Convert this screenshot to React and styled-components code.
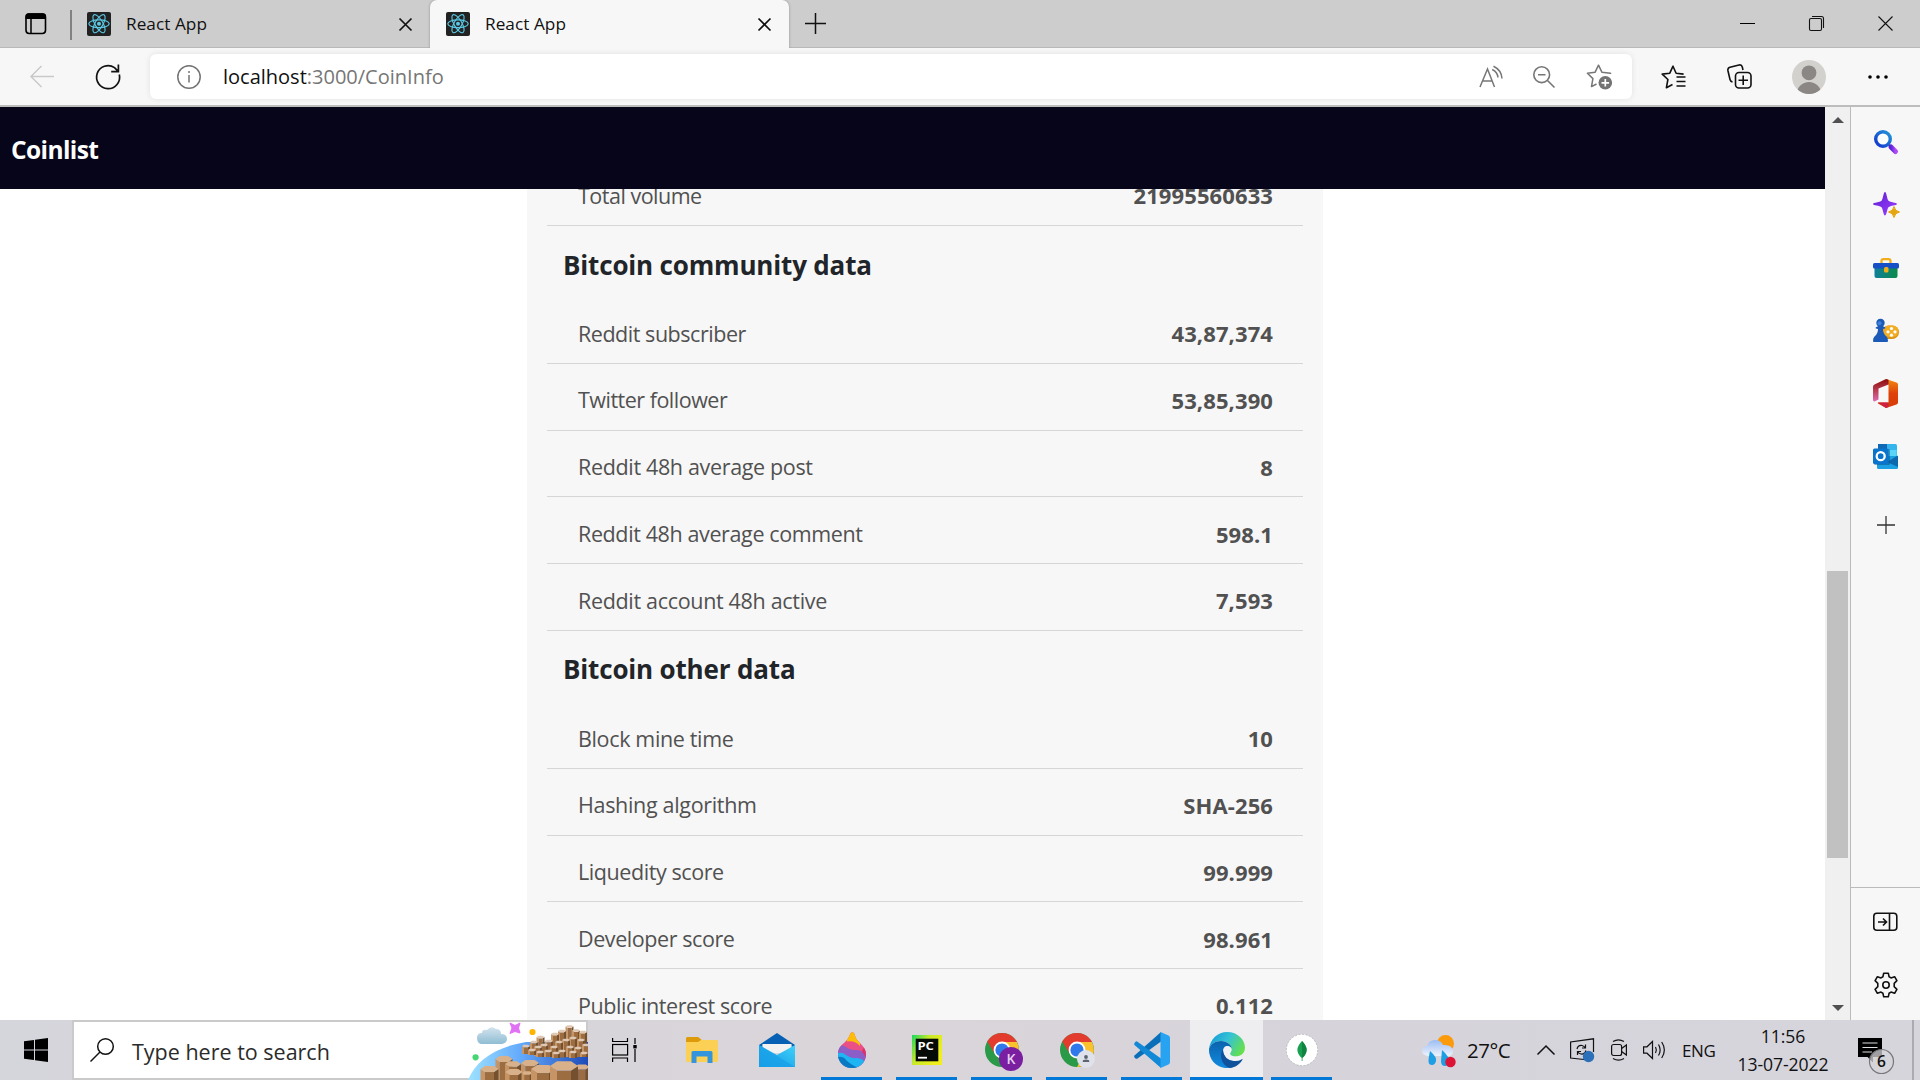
import React from "react";
import styled, { createGlobalStyle } from "styled-components";

const GlobalStyle = createGlobalStyle`
  * { box-sizing: border-box; }
  body { margin: 0; overflow: hidden; font-family: "Segoe UI", "Open Sans", "Noto Sans", sans-serif; }
  svg { display: block; flex: none; overflow: visible; }
`;

const Screen = styled.div`
  width: 1920px;
  height: 1080px;
  display: flex;
  flex-direction: column;
  background: #fff;
  overflow: hidden;
`;

/* ---------- tab strip ---------- */

const TabStrip = styled.div`
  height: 48px;
  flex: none;
  display: flex;
  background: #cdcdcd;
  box-shadow: inset 0 -1px 0 #b9b9b9;
`;

const TabActions = styled.div`
  width: 72px;
  display: flex;
  align-items: center;
  justify-content: space-between;
  padding-left: 25px;
`;

const TabDivider = styled.div`
  width: 2px;
  height: 30px;
  margin-top: 2px;
  background: #818181;
`;

const Tab = styled.div`
  width: ${(p) => p.$width}px;
  display: flex;
  align-items: center;
  padding: 0 18px 0 ${(p) => p.$left}px;
  background: ${(p) => (p.$active ? "#f7f7f7" : "transparent")};
  border-radius: 7px 7px 0 0;
  box-shadow: ${(p) => (p.$active ? "0 0 3px rgba(0,0,0,.28)" : "none")};
  clip-path: inset(0 -4px 0 -4px);
`;

const TabTitle = styled.span`
  flex: 1;
  margin-left: ${(p) => p.$gap}px;
  font-size: 17.2px;
  line-height: 24px;
  letter-spacing: 0.05px;
  color: #111;
`;

const NewTab = styled.div`
  width: 52px;
  display: flex;
  align-items: center;
  justify-content: center;
  padding-bottom: 2px;
`;

const WindowButtons = styled.div`
  margin-left: auto;
  display: flex;
`;

const WindowButton = styled.div`
  width: 69px;
  display: flex;
  align-items: center;
  justify-content: center;
  padding-bottom: 1px;
`;

/* ---------- address bar ---------- */

const Toolbar = styled.div`
  height: 59px;
  flex: none;
  display: flex;
  align-items: center;
  background: #f7f7f7;
  border-bottom: 2px solid #bdbdbd;
`;

const ToolButton = styled.div`
  width: ${(p) => p.$width}px;
  display: flex;
  align-items: center;
  justify-content: center;
`;

const AddressBar = styled.div`
  width: 1482px;
  height: 45px;
  display: flex;
  align-items: center;
  margin-left: 18px;
  padding-left: 27px;
  background: #fff;
  border-radius: 6px;
  box-shadow: 0 0 6px rgba(0, 0, 0, 0.09);
`;

const Url = styled.div`
  flex: 1;
  margin-left: 22px;
  font-size: 20px;
  line-height: 28px;
  letter-spacing: 0;
  color: #767676;
`;

const Host = styled.span`
  color: #111;
`;

/* ---------- page ---------- */

const Body = styled.div`
  height: 913px;
  flex: none;
  display: flex;
`;

const Page = styled.div`
  width: 1825px;
  display: flex;
  flex-direction: column;
  overflow: hidden;
`;

const NavBar = styled.header`
  height: 82px;
  flex: none;
  display: flex;
  align-items: center;
  padding: 2px 0 0 11px;
  background: #06051a;
  color: #fff;
  font-size: 24.5px;
  font-weight: 700;
  letter-spacing: -0.6px;
`;

const Content = styled.main`
  flex: 1;
  min-height: 0;
  overflow: hidden;
  display: flex;
  justify-content: center;
  align-items: flex-start;
`;

const Card = styled.section`
  width: 796px;
  flex: none;
  margin: -29.8px 0 0 25px;
  padding: 0 20px 40px;
  background: #f7f7f7;
`;

const SectionTitle = styled.h2`
  height: 71px;
  margin: 0;
  padding: 6px 0 0 16px;
  display: flex;
  align-items: center;
  font-size: 26px;
  font-weight: 700;
  letter-spacing: -0.17px;
  color: #212529;
`;

const Row = styled.div`
  height: 66.8px;
  display: flex;
  align-items: center;
  justify-content: space-between;
  padding: 6.5px 30px 0 31px;
  border-bottom: 1px solid #d6d6d6;
  font-size: 21.5px;
  color: #515151;
`;

const Label = styled.span`
  letter-spacing: ${(p) => p.$tracking}px;
`;

const Value = styled.span`
  font-size: 22px;
  font-weight: 700;
  letter-spacing: 0.1px;
`;

const Scrollbar = styled.div`
  width: 25px;
  display: flex;
  flex-direction: column;
  align-items: center;
  justify-content: space-between;
  background: #f0f0f0;
  padding: 10px 0 9px;
`;

const Thumb = styled.div`
  width: 21px;
  height: 287px;
  margin-top: 301px;
  background: #c1c1c1;
`;

const Sidebar = styled.aside`
  width: 70px;
  display: flex;
  flex-direction: column;
  border-left: 1px solid #bbb;
  background: #f7f7f7;
`;

const SideTop = styled.div`
  flex: 1;
  padding-top: 3px;
`;

const SideBottom = styled.div`
  height: 133px;
  padding-top: 2px;
  border-top: 1px solid #bbb;
`;

const SideItem = styled.div`
  height: ${(p) => p.$height || 63}px;
  display: flex;
  align-items: center;
  justify-content: center;
`;

/* ---------- taskbar ---------- */

const Taskbar = styled.footer`
  height: 60px;
  flex: none;
  display: flex;
  background: linear-gradient(90deg, #d5d5dc 0, #d8d5da 600px, #dad5d9 900px, #d6d3db 1350px, #d6d5dc 100%);
`;

const StartButton = styled.div`
  width: 72px;
  display: flex;
  align-items: center;
  justify-content: center;
`;

const SearchBox = styled.div`
  width: 516px;
  display: flex;
  align-items: center;
  border: 2px solid #cacaca;
  background: #fff;
  padding-left: 16px;
`;

const SearchText = styled.span`
  flex: 1;
  margin: 3px 0 0 18px;
  font-size: 21.5px;
  letter-spacing: 0;
  color: #2b2b2b;
`;

const ArtFrame = styled.div`
  width: 120px;
  height: 60px;
  margin: -2px -2px -2px 0;
  overflow: hidden;
`;

const Apps = styled.div`
  display: flex;
  gap: 2px;
`;

const AppButton = styled.div`
  width: 73px;
  display: flex;
  flex-direction: column;
  align-items: center;
  background: ${(p) => (p.$active ? "#eeeef0" : "transparent")};

  &:first-child {
    margin-right: 2px;
  }
`;

const AppIcon = styled.div`
  height: 57px;
  display: flex;
  align-items: center;
  padding-top: 3px;
`;

const Underline = styled.div`
  width: ${(p) => (p.$active ? 73 : 61)}px;
  height: 3px;
  background: #0078d7;
`;

const Tray = styled.div`
  margin-left: auto;
  width: 498px;
  display: flex;
  align-items: center;
  color: #111;
`;

const TrayText = styled.span`
  width: ${(p) => p.$width}px;
  font-size: ${(p) => p.$size}px;
  letter-spacing: ${(p) => p.$tracking || 0}px;
  white-space: nowrap;
`;

const TrayIcon = styled.div`
  width: ${(p) => p.$width}px;
`;

const Clock = styled.div`
  width: 120px;
  display: flex;
  flex-direction: column;
  align-items: center;
  font-size: 17.6px;
  line-height: 28px;
  letter-spacing: -0.1px;
`;

const Notifications = styled.div`
  width: 58px;
  padding: 14px 0 0 15px;
`;

const ShowDesktop = styled.div`
  width: 8px;
  height: 60px;
  border-left: 2px solid #acaab0;
`;

/* ---------- drawings ---------- */

const ReactFavicon = () => (
  <svg width="24" height="24" viewBox="0 0 24 24">
    <rect width="24" height="24" rx="2" fill="#222" />
    <g fill="none" stroke="#5cc9e6" strokeWidth="1.15">
      {[0, 60, 120].map((a) => (
        <ellipse key={a} cx="12" cy="11.7" rx="10.2" ry="3.9" transform={`rotate(${a} 12 11.7)`} />
      ))}
    </g>
    <circle cx="12" cy="11.7" r="2" fill="#5cc9e6" />
  </svg>
);

const Close = ({ size = 13, weight = 1.7 }) => (
  <svg width={size} height={size} viewBox={`0 0 ${size} ${size}`} stroke="#111" strokeWidth={weight}>
    <path d={`M.5 .5 L${size - 0.5} ${size - 0.5} M${size - 0.5} .5 L.5 ${size - 0.5}`} />
  </svg>
);

const Plus = ({ size = 21, color = "#111" }) => (
  <svg width={size} height={size} viewBox="0 0 21 21" stroke={color} strokeWidth="1.5">
    <path d="M10.5 0V21M0 10.5H21" />
  </svg>
);

const TabMenuIcon = () => (
  <svg width="22" height="22" viewBox="0 0 22 22">
    <rect x="1" y="1" width="19.5" height="19.5" rx="3.2" fill="none" stroke="#000" strokeWidth="1.6" />
    <path d="M.5 6V3.5Q.5 .3 3.7 .3H17.8Q21 .3 21 3.5V6Z" />
    <path d="M6 6V20.5" stroke="#000" strokeWidth="1.5" />
  </svg>
);

const Gear = () => (
  <svg width="26" height="26" viewBox="0 0 26 26" fill="none" stroke="#111" strokeWidth="1.6" strokeLinejoin="round">
    <path d="M10.700 1.200h4.600l.8 3.600 1.900 1.100 3.600-1.200 2.300 4-2.700 2.600v3.400l2.700 2.600-2.300 4-3.600-1.200-1.900 1.100-.8 3.600h-4.600l-.8-3.600L8 20.100l-3.600 1.200-2.300-4 2.700-2.600v-3.400L2.100 8.700l2.300-4L8 5.900l1.900-1.100z" />
    <circle cx="13" cy="13" r="3.200" />
  </svg>
);

const SideSearch = () => (
  <svg width="24" height="24" viewBox="0 0 24 24">
    <defs>
      <linearGradient id="lens" x1="0" y1="1" x2="1" y2="0">
        <stop offset="0" stopColor="#1233cf" />
        <stop offset="1" stopColor="#2396d8" />
      </linearGradient>
      <linearGradient id="handle">
        <stop offset="0" stopColor="#5a22dc" />
        <stop offset="1" stopColor="#b04cf5" />
      </linearGradient>
    </defs>
    <path d="M14.5 14.5L18 18" stroke="#444" strokeWidth="2" />
    <circle cx="9" cy="9" r="7.3" fill="#fcfdff" stroke="url(#lens)" strokeWidth="3.4" />
    <path d="M17 17L21.5 21.5" stroke="url(#handle)" strokeWidth="5" strokeLinecap="round" />
  </svg>
);

const SideSparkle = () => (
  <svg width="26" height="26" viewBox="0 0 26 26">
    <defs>
      <linearGradient id="spark" x1="0" y1="0" x2="1" y2="1">
        <stop offset="0" stopColor="#5b1fd0" />
        <stop offset="1" stopColor="#a040ff" />
      </linearGradient>
    </defs>
    <path d="M12 0C13.500 0 14 7 15.500 8.800C17 10.500 24 10.500 24 12C24 13.500 17 13.500 15.500 15.200C14 17 13.500 23.500 12 23.500C10.500 23.500 10 17 8.500 15.200C7 13.500 0 13.500 0 12C0 10.500 7 10.500 8.500 8.800C10 7 10.500 0 12 0Z" fill="url(#spark)" />
    <path d="M21 14.500Q21.800 19.200 26.500 20Q21.800 20.800 21 25.500Q20.200 20.800 15.500 20Q20.200 19.200 21 14.500Z" fill="#e5a50e" stroke="#e5a50e" strokeLinejoin="round" />
  </svg>
);

const SideToolbox = () => (
  <svg width="26" height="20" viewBox="0 0 26 20">
    <defs>
      <linearGradient id="box">
        <stop offset="0" stopColor="#0d7f9c" />
        <stop offset="1" stopColor="#0c8a48" />
      </linearGradient>
    </defs>
    <path d="M8.500 6V3Q8.500 1.200 10.500 1.200H15.500Q17.500 1.200 17.500 3V6" fill="none" stroke="#f0ad1c" strokeWidth="2.300" />
    <rect x="1.500" y="7" width="23" height="13" rx="2" fill="url(#box)" />
    <rect x="0" y="5" width="26" height="5.500" rx="1.500" fill="#174fc6" />
    <rect x="11" y="9" width="4.500" height="5.500" rx="1.500" fill="#f0ad1c" />
  </svg>
);

const SideGames = () => (
  <svg width="26" height="22" viewBox="0 0 26 22">
    <rect x="9" y="5.500" width="17" height="13.500" rx="6.700" fill="#dc9512" />
    <rect x="10" y="5.500" width="15.500" height="11.500" rx="5.700" fill="#f2ad24" />
    <g fill="#fff">
      <circle cx="18.500" cy="8.500" r="1.600" />
      <circle cx="15" cy="11.800" r="1.600" />
      <circle cx="22" cy="11.800" r="1.600" />
      <circle cx="18.500" cy="15.200" r="1.600" />
    </g>
    <path d="M3 8.500Q2 8 3 7.200L5 6.300A4.200 4.200 0 1 1 10 6.300L12 7.200Q13 8 12 8.500L10 9Q10 14 13.500 16.500Q15 17.500 15 21Q15 22 14 22H1Q0 22 0 21Q0 17.500 1.500 16.500Q5 14 5 9Z" fill="#1c5ab8" />
    <circle cx="6.500" cy="3.200" r="2" fill="#3f80dd" />
  </svg>
);

const SideOffice = () => (
  <svg width="25" height="29" viewBox="0 0 25 29">
    <defs>
      <linearGradient id="off1" x1="0" y1="0" x2="0" y2="1">
        <stop offset="0" stopColor="#f28a13" />
        <stop offset=".5" stopColor="#df4209" />
        <stop offset="1" stopColor="#d63b08" />
      </linearGradient>
      <linearGradient id="off2" x1="0" y1="0" x2="0" y2="1">
        <stop offset="0" stopColor="#8c0b0b" />
        <stop offset=".5" stopColor="#b93b52" />
        <stop offset="1" stopColor="#dd6bb2" />
      </linearGradient>
    </defs>
    <path d="M13 0L23.500 3.500Q25 4 25 5.500V23.500Q25 25 23.500 25.500L13 29L5 24.500Q4.500 24 5 23.500H15.500V6Z" fill="url(#off1)" />
    <path d="M13 0L1.500 5.500Q0 6.300 0 8V20.500Q0 23 2 22.300L5.500 20.500V9.500L15.500 5.500V.8Z" fill="url(#off2)" />
    <path d="M5 23.500H15.500V28L13 29Z" fill="#cf2140" />
  </svg>
);

const SideOutlook = () => (
  <svg width="25" height="25" viewBox="0 0 25 25">
    <rect x="5" y="0" width="19" height="16" rx="1.500" fill="#35b5ee" />
    <path d="M5 0H14V6H5Z" fill="#1168b5" />
    <path d="M14 6H23.500V12H14Z" fill="#5ad5fa" />
    <path d="M4 12H25V23.500Q25 25 23.500 25H5.500Q4 25 4 23.500Z" fill="#1ba0e4" />
    <path d="M14 18L25 11.500V23Z" fill="#0d68ac" />
    <rect x="1" y="5" width="16" height="16" rx="1.500" fill="#0b4d87" opacity=".5" />
    <rect x="0" y="4.500" width="15.500" height="15.500" rx="1.500" fill="#0a74cc" />
    <circle cx="7.700" cy="12.200" r="4" fill="none" stroke="#fff" strokeWidth="2.300" />
  </svg>
);

const SidePanelIcon = () => (
  <svg width="25" height="18" viewBox="0 0 25 18" fill="none" stroke="#111" strokeWidth="1.600">
    <rect x=".8" y=".3" width="23" height="17" rx="3" />
    <path d="M16.500 1V17M5 9H13.500M10 5.500L13.500 9L10 12.500" />
  </svg>
);

const Column = ({ cx, y, w, h = 40 }) => {
  const r = w / 2;
  const k = w * 0.17;
  const q = r * 0.5;
  return (
    <g>
      <path d={`M${cx - r} ${y}L${cx - q} ${y + k}V${y + h}H${cx - r}Z`} fill="#c69465" />
      <path d={`M${cx - q} ${y + k}H${cx + q}V${y + h}H${cx - q}Z`} fill="#9c6d40" />
      <path d={`M${cx + q} ${y + k}L${cx + r} ${y}V${y + h}H${cx + q}Z`} fill="#74502f" />
      <path d={`M${cx - r} ${y}L${cx - q} ${y - k}H${cx + q}L${cx + r} ${y}L${cx + q} ${y + k}H${cx - q}Z`} fill={w > 10 ? "#d8b08a" : "#e0c8b4"} />
    </g>
  );
};

const backColumns = [
  [101.5, 6.5, 27], [94, 11, 22], [108, 10.5, 25], [115, 12, 24], [87, 14, 20], [72.5, 17, 18], [81, 21, 14],
  [105, 18, 18], [98, 20, 16], [91, 22, 14], [113, 20, 16], [66, 22, 12], [118, 25, 11], [58, 26, 8], [76, 25, 11],
  [86, 27, 9], [70, 27, 9], [102, 27, 10], [110, 28, 9], [64, 30, 5], [94, 31, 6.5], [72, 32, 5], [80, 31, 6],
  [88, 33, 5], [105, 32, 6], [116, 33, 4],
];

const frontColumns = [
  [36, 39, 17], [45, 44, 16], [62, 43, 18], [21.5, 49, 18], [46, 52, 17], [59, 53, 11], [75, 49, 24], [114, 47, 15], [96, 46, 28],
];

const SearchArt = () => (
  <svg width="120" height="60" viewBox="0 0 120 60">
    <defs>
      <linearGradient id="sea">
        <stop offset="0" stopColor="#9ee2ff" />
        <stop offset=".45" stopColor="#62a8fb" />
        <stop offset="1" stopColor="#1e4bb8" />
      </linearGradient>
      <linearGradient id="cloud" x1="0" y1="0" x2="0" y2="1">
        <stop offset="0" stopColor="#d3e3ee" />
        <stop offset="1" stopColor="#8fbdd3" />
      </linearGradient>
    </defs>
    <path d="M0 60C8 40 28 27 58 22H120V60Z" fill="url(#sea)" />
    <path d="M13 24Q9 23 9 18Q9 13 14 13Q14 9 19 10Q23 5 28 9Q33 9 33 14Q39 14 39 19Q39 23 34 24Z" fill="url(#cloud)" />
    <path d="M42 3L47 5.500L52 3L50.500 8L52 13L47 11.500L42 13.500L44 8Z" fill="#e071f5" stroke="#e071f5" strokeWidth="1" strokeLinejoin="round" />
    <circle cx="64.500" cy="12" r="3.100" fill="#ffb400" />
    <circle cx="7.600" cy="37.300" r="3.100" fill="#46d673" />
    {backColumns.map(([cx, y, h]) => (
      <Column key={`${cx}-${y}`} cx={cx} y={y} w={8} h={h} />
    ))}
    {frontColumns.map(([cx, y, w]) => (
      <Column key={`${cx}-${y}`} cx={cx} y={y} w={w} />
    ))}
  </svg>
);

const TaskViewIcon = () => (
  <svg width="25" height="24" viewBox="0 0 25 24" fill="none" stroke="#000" strokeWidth="1.200">
    <path d="M.6 0V3.500H15.500V0M.6 24V20H15.500V24M23 0V6M23 11V24" />
    <rect x=".6" y="6.500" width="15" height="10.500" />
    <rect x="21.300" y="7" width="3.400" height="3.400" fill="#000" stroke="none" />
  </svg>
);

const ExplorerIcon = () => (
  <svg width="32" height="26" viewBox="0 0 32 26">
    <path d="M0 1.500Q0 0 1.500 0H12L15.500 3H30.500Q32 3 32 4.500V23.500Q32 25 30.500 25H1.500Q0 25 0 23.500Z" fill="#fcd054" />
    <path d="M0 1.500Q0 0 1.500 0H12L15.500 2.800L12 5H0Z" fill="#dd9a0a" />
    <path d="M5.500 26V15.500Q5.500 14 7 14H25Q26.500 14 26.500 15.500V26H21.500V19.500H10.500V26Z" fill="#3595dc" />
  </svg>
);

const MailIcon = () => (
  <svg width="36" height="34" viewBox="0 0 36 34">
    <defs>
      <linearGradient id="mail" x1="0" y1="1" x2="1" y2="0">
        <stop offset="0" stopColor="#0d94e3" />
        <stop offset="1" stopColor="#41d2fa" />
      </linearGradient>
    </defs>
    <path d="M0 12L18 0L36 12V18H0Z" fill="#0860b4" />
    <path d="M3.500 11H32.500L33 20H3Z" fill="#f2f2f2" />
    <path d="M0 12L18 22L36 12V34H0Z" fill="url(#mail)" />
    <path d="M0 12L36 34H0Z" fill="#1aa0e8" opacity=".75" />
  </svg>
);

const PaintIcon = () => (
  <svg width="28" height="36" viewBox="0 0 28 36">
    <defs>
      <clipPath id="drop">
        <path d="M14 0C18 1 16 5 20 9C25 14 28 17 28 22.500C28 30 22 36 14 36C6 36 0 30 0 22.500C0 15 4 13 8 9C12 5 11 2 14 0Z" />
      </clipPath>
    </defs>
    <g clipPath="url(#drop)">
      <rect width="28" height="36" fill="#ea4f86" />
      <path d="M8 0H22V14Q17 8 9 9.500Z" fill="#fcbc08" />
      <path d="M0 15Q5 12 8 15Q12 18.500 17 18Q24 17 28 24V36H0Z" fill="#8c5fc8" />
      <path d="M28 14Q24 17 24 20L28 25Z" fill="#d8356e" />
      <path d="M0 21Q5 20 8 23Q13 27 18 26Q23 26 26 29V36H0Z" fill="#1fb4f2" />
      <path d="M0 25Q5 24 8 28Q12 32 20 36H0Z" fill="#087ac4" />
    </g>
  </svg>
);

const PyText = styled.text`
  font: 700 10.5px "Open Sans", "Noto Sans", sans-serif;
  fill: #fff;
`;

const PyCharmIcon = () => (
  <svg width="30" height="30" viewBox="0 0 30 30">
    <defs>
      <linearGradient id="py" x1="0" y1="0" x2="1" y2=".6">
        <stop offset="0" stopColor="#18d85f" />
        <stop offset=".45" stopColor="#c8ea28" />
        <stop offset="1" stopColor="#f2ee1c" />
      </linearGradient>
    </defs>
    <rect width="30" height="30" fill="url(#py)" />
    <rect x="3.700" y="3.700" width="22.600" height="22.600" fill="#050a06" />
    <PyText x="5.400" y="14.500" textLength="16.500" lengthAdjust="spacingAndGlyphs">PC</PyText>
    <rect x="6" y="21.800" width="9" height="1.800" fill="#fff" />
  </svg>
);

const Initial = styled.text`
  font: 600 14px "Open Sans", "Noto Sans", sans-serif;
  fill: #e5cdf0;
  text-anchor: middle;
`;

const ChromeIcon = ({ profile }) => (
  <svg width="34" height="34" viewBox="0 0 34 34">
    <circle cx="17" cy="17" r="17" fill="#2a9a48" />
    <path d="M17 9H31.900A17 17 0 0 1 17 34L24.500 20Z" fill="#fcc22d" />
    <path d="M2.300 8.500A17 17 0 0 1 31.700 8.500L32 9H17L10 21Z" fill="#e33b2e" />
    <circle cx="17" cy="17" r="8.400" fill="#fff" />
    <circle cx="17" cy="17" r="6.600" fill="#3079ea" />
    {profile ? (
      <g>
        <circle cx="26" cy="26" r="12" fill="#7a1fa0" />
        <Initial x="26" y="31">K</Initial>
      </g>
    ) : (
      <g>
        <circle cx="26" cy="26" r="9" fill="#dfe2ea" />
        <circle cx="26" cy="24" r="1.900" fill="#5d6470" />
        <path d="M22.800 29V28Q22.800 26.500 26 26.500Q29.200 26.500 29.200 28V29Z" fill="#5d6470" />
      </g>
    )}
  </svg>
);

const VsCodeIcon = () => (
  <svg width="36" height="36" viewBox="0 0 36 36">
    <path d="M27 0L.5 23.500Q-.3 24.500 .5 25.500L1.500 26.500Q2.500 27.200 3.500 26.500L27 9.500Z" fill="#0a6fb8" />
    <path d="M27 36L.5 13Q-.3 12 .5 11L1.500 9.800Q2.500 9 3.500 9.700L27 26.500Z" fill="#1289d6" />
    <path d="M26.500 0L34.500 3.500Q36 4.200 36 6V30Q36 31.800 34.500 32.500L26.500 36Z" fill="#27a3f2" />
  </svg>
);

const EdgeIcon = () => (
  <svg width="36" height="36" viewBox="0 0 36 36">
    <defs>
      <linearGradient id="eg1" x1="0" y1=".2" x2="1" y2=".6">
        <stop offset="0" stopColor="#149bd8" />
        <stop offset=".5" stopColor="#36c3d4" />
        <stop offset="1" stopColor="#66e04b" />
      </linearGradient>
      <linearGradient id="eg2" x1="0" y1="0" x2="0" y2="1">
        <stop offset="0" stopColor="#0b62ac" />
        <stop offset="1" stopColor="#108be0" />
      </linearGradient>
    </defs>
    <path d="M0 17C1 7 9 0 18 0C29 0 36 8 36 15.500C36 21 32 24.500 27 24.500C23 24.500 21 23 21 21.800C21 20.500 22.500 20 22.500 17.500C22.500 13 18 9 12 9C6 9 1.500 12.500 0 17Z" fill="url(#eg1)" />
    <path d="M0 17C1.500 12 6 9 12 9C18 9 22.500 13 22.500 16C21 14.500 19.500 14 18 14C14.500 16.500 14 21 15.500 25C18 31 25 33 30 30.500C26 35 21 36.500 16 36C7 35 -.5 27 0 17Z" fill="url(#eg2)" />
    <path d="M14 17C10 22 12 33 20.500 36C27 35.500 31.500 31.500 33.500 27.500C33.800 26.800 33.200 26.600 32.500 27C26 30.500 17 27.500 15 21.500Q14 19 14 17Z" fill="#10519c" />
    <path d="M14 18Q15 14 18 14Q21.500 14 22.500 17.500C22.500 20 21 20.500 21 21.800C21 25 27 25.500 31 23.800Q33 24 34 26.500Q30 29.500 25 29Q15 28 14 18Z" fill="#f0f2f5" />
  </svg>
);

const MongoIcon = () => (
  <svg width="32" height="32" viewBox="0 0 32 32">
    <circle cx="16" cy="16" r="15.700" fill="#fff" stroke="#aaa" strokeWidth=".7" strokeDasharray="2 1.500" />
    <path d="M16 7Q25 16 16.500 24V27H15.700V24Q7 16 16 7Z" fill="#18a050" />
    <path d="M16 7Q25 16 16.200 24Z" fill="#118241" />
  </svg>
);

const WeatherIcon = () => (
  <svg width="34" height="30" viewBox="0 0 34 30">
    <defs>
      <linearGradient id="wc" x1="0" y1="0" x2="0" y2="1">
        <stop offset="0" stopColor="#9bbdf3" />
        <stop offset="1" stopColor="#eef3fb" />
      </linearGradient>
    </defs>
    <circle cx="23.500" cy="8.500" r="8.500" fill="#fb9a0b" />
    <path d="M6 21Q0 20 0 16Q0 11.500 5 11Q7 5 13 5Q19 5 21 10Q30 9 31 16Q31 21 26 21Z" fill="url(#wc)" />
    <path d="M8 16Q15 22 14 26Q13 30 10 30Q6.500 30 6.500 26Q6.500 23 8 16ZM20 15Q28 22 27 27Q26 31 23 31Q19 31 19 26Z" fill="#1f9fe3" />
    <circle cx="28.500" cy="27" r="5.200" fill="#dc1335" />
  </svg>
);

const BadgeText = styled.text`
  font: 600 15.5px "Open Sans", "Noto Sans", sans-serif;
  fill: #111;
  text-anchor: middle;
`;

const NotificationIcon = () => (
  <svg width="38" height="38" viewBox="0 0 38 38">
    <path d="M0 0H24V19H15V24.500L9.500 19H0Z" fill="#000" />
    <path d="M4.500 5H19.500M4.500 9.500H19.500M4.500 14H14" stroke="#ddd" strokeWidth="1.200" />
    <circle cx="23.500" cy="23.500" r="12" fill="#d5d4da" fillOpacity=".75" stroke="#77767a" strokeWidth="1.200" />
    <BadgeText x="23.500" y="29.200">6</BadgeText>
  </svg>
);

/* ---------- data: label, value, label tracking ---------- */

const market = [["Total volume", "21995560633", -0.5]];

const community = [
  ["Reddit subscriber", "43,87,374", -0.46],
  ["Twitter follower", "53,85,390", -0.5],
  ["Reddit 48h average post", "8", -0.34],
  ["Reddit 48h average comment", "598.1", -0.38],
  ["Reddit account 48h active", "7,593", -0.32],
];

const other = [
  ["Block mine time", "10", -0.35],
  ["Hashing algorithm", "SHA-256", -0.32],
  ["Liquedity score", "99.999", -0.42],
  ["Developer score", "98.961", -0.42],
  ["Public interest score", "0.112", -0.42],
];

const sideIcons = [SideSearch, SideSparkle, SideToolbox, SideGames, SideOffice, SideOutlook];

const apps = [
  { icon: <TaskViewIcon /> },
  { icon: <ExplorerIcon /> },
  { icon: <MailIcon /> },
  { icon: <PaintIcon />, open: true },
  { icon: <PyCharmIcon />, open: true },
  { icon: <ChromeIcon profile />, open: true },
  { icon: <ChromeIcon />, open: true },
  { icon: <VsCodeIcon />, open: true },
  { icon: <EdgeIcon />, open: true, active: true },
  { icon: <MongoIcon />, open: true },
];

const DataRows = ({ items }) =>
  items.map(([label, value, tracking]) => (
    <Row key={label}>
      <Label $tracking={tracking}>{label}</Label>
      <Value>{value}</Value>
    </Row>
  ));

export default function App() {
  return (
    <Screen>
      <GlobalStyle />
      <TabStrip>
        <TabActions>
          <TabMenuIcon />
          <TabDivider />
        </TabActions>
        <Tab $width={358} $left={15}>
          <ReactFavicon />
          <TabTitle $gap={15}>React App</TabTitle>
          <Close />
        </Tab>
        <Tab $width={359} $left={16} $active>
          <ReactFavicon />
          <TabTitle $gap={15}>React App</TabTitle>
          <Close />
        </Tab>
        <NewTab><Plus /></NewTab>
        <WindowButtons>
          <WindowButton>
            <svg width="15" height="1" viewBox="0 0 15 1"><rect width="15" height="1" /></svg>
          </WindowButton>
          <WindowButton>
            <svg width="15" height="15" viewBox="0 0 15 15" fill="none" stroke="#111" strokeWidth="1.100">
              <rect x=".5" y="2.500" width="12" height="12" rx="1.500" />
              <path d="M3 .5H12.500Q14.500 .5 14.500 2.500V12" />
            </svg>
          </WindowButton>
          <WindowButton><Close size={15} weight={1.1} /></WindowButton>
        </WindowButtons>
      </TabStrip>

      <Toolbar>
        <ToolButton $width={84}>
          <svg width="24" height="21" viewBox="0 0 24 21" fill="none" stroke="#c9c9c9" strokeWidth="1.500">
            <path d="M24 10.500H1M11.500 0L1 10.500L11.500 21" />
          </svg>
        </ToolButton>
        <ToolButton $width={48}>
          <svg width="26" height="26" viewBox="0 0 26 26" fill="none" stroke="#111" strokeWidth="1.700">
            <path d="M24.300 10.500A11.500 11.500 0 1 1 19.500 3.600L22.700 6.900M23.400 .5V7.700H16.200" />
          </svg>
        </ToolButton>
        <AddressBar>
          <svg width="24" height="24" viewBox="0 0 24 24" fill="none" stroke="#737373" strokeWidth="1.500">
            <circle cx="12" cy="12" r="11.200" />
            <path d="M12 10V17.500M12 6V8" />
          </svg>
          <Url><Host>localhost</Host>:3000/CoinInfo</Url>
          <ToolButton $width={53}>
            <svg width="24" height="24" viewBox="0 0 24 24" fill="none" stroke="#767676" strokeWidth="1.500">
              <path d="M1 22L8.500 4L15.500 22M3.800 16H13.200M14.500 1.200Q22.500 5 23 13.500M13.200 4.500Q18.500 7 19 12.500" />
            </svg>
          </ToolButton>
          <ToolButton $width={54}>
            <svg width="22" height="22" viewBox="0 0 22 22" fill="none" stroke="#767676" strokeWidth="1.600">
              <circle cx="8.700" cy="8.700" r="7.900" />
              <path d="M14.500 14.500L21.500 21.500M5 8.700H12.500" />
            </svg>
          </ToolButton>
          <ToolButton $width={55}>
            <svg width="26" height="26" viewBox="0 0 26 26" fill="none" stroke="#767676" strokeWidth="1.500" strokeLinejoin="round">
              <path d="M24.500 10V9.300L16 8.300L12.500 1.200L9 8.300L1.400 9.300L6.900 14.600L5.500 22.600L10.500 20" />
              <circle cx="19.300" cy="18.800" r="6.800" fill="#737373" stroke="none" />
              <path d="M19.300 15V22.600M15.500 18.800H23.100" stroke="#fff" strokeWidth="1.700" />
            </svg>
          </ToolButton>
          <ToolButton $width={6} />
        </AddressBar>
        <ToolButton $width={83}>
          <svg width="25" height="24" viewBox="0 0 25 24" fill="none" stroke="#111" strokeWidth="1.600" strokeLinejoin="round">
            <path d="M22.600 9.100L15.100 8.200L12 1.200L8.800 8.200L1.200 9.100L6.900 14.500L5.400 22.700L11.500 19.500" />
            <path d="M15.500 12H24.500M15.500 16.500H24.500M15.500 21H24.500" />
          </svg>
        </ToolButton>
        <ToolButton $width={49}>
          <svg width="25" height="25" viewBox="0 0 25 25" fill="none" stroke="#111" strokeWidth="1.600">
            <path d="M5.500 18Q3.500 17.500 3 15.500L.9 6.500Q.5 4 3 3.300L12 1Q14.700 .5 15.300 3L16 6" />
            <rect x="8.500" y="8.500" width="15.500" height="15.500" rx="3.500" />
            <path d="M16.200 11.500V21M11.500 16.200H21" />
          </svg>
        </ToolButton>
        <ToolButton $width={89}>
          <svg width="34" height="34" viewBox="0 0 34 34">
            <clipPath id="avatar"><circle cx="17" cy="17" r="17" /></clipPath>
            <g clipPath="url(#avatar)">
              <rect width="34" height="34" fill="#d3d1ce" />
              <circle cx="17" cy="12.800" r="7.400" fill="#8b8784" />
              <ellipse cx="17" cy="34" rx="12.200" ry="12" fill="#8b8784" />
            </g>
          </svg>
        </ToolButton>
        <ToolButton $width={49}>
          <svg width="20" height="4" viewBox="0 0 20 4">
            <circle cx="2" cy="2" r="1.800" /><circle cx="10" cy="2" r="1.800" /><circle cx="18" cy="2" r="1.800" />
          </svg>
        </ToolButton>
      </Toolbar>

      <Body>
        <Page>
          <NavBar>Coinlist</NavBar>
          <Content>
            <Card>
              <DataRows items={market} />
              <SectionTitle>Bitcoin community data</SectionTitle>
              <DataRows items={community} />
              <SectionTitle>Bitcoin other data</SectionTitle>
              <DataRows items={other} />
            </Card>
          </Content>
        </Page>
        <Scrollbar>
          <svg width="12" height="6" viewBox="0 0 12 6"><path d="M0 6L6 0L12 6Z" fill="#505050" /></svg>
          <Thumb />
          <svg width="12" height="6" viewBox="0 0 12 6"><path d="M0 0L6 6L12 0Z" fill="#505050" /></svg>
        </Scrollbar>
        <Sidebar>
          <SideTop>
            {sideIcons.map((Icon, i) => <SideItem key={i}><Icon /></SideItem>)}
            <SideItem $height={73}><Plus size={18} color="#333" /></SideItem>
          </SideTop>
          <SideBottom>
            <SideItem><SidePanelIcon /></SideItem>
            <SideItem><Gear /></SideItem>
          </SideBottom>
        </Sidebar>
      </Body>

      <Taskbar>
        <StartButton>
          <svg width="24" height="24" viewBox="0 0 24 24">
            <path d="M0 3.300L10 2V11.500H0ZM11 1.800L24 0V11.500H11ZM0 12.500H10V22L0 20.700ZM11 12.500H24V24L11 22.200Z" />
          </svg>
        </StartButton>
        <SearchBox>
          <svg width="24" height="24" viewBox="0 0 24 24" fill="none" stroke="#111" strokeWidth="1.500">
            <circle cx="15.500" cy="8.500" r="7.800" />
            <path d="M10 14L.5 23.500" />
          </svg>
          <SearchText>Type here to search</SearchText>
          <ArtFrame><SearchArt /></ArtFrame>
        </SearchBox>
        <Apps>
          {apps.map((a, i) => (
            <AppButton key={i} $active={a.active}>
              <AppIcon>{a.icon}</AppIcon>
              {a.open && <Underline $active={a.active} />}
            </AppButton>
          ))}
        </Apps>
        <Tray>
          <TrayIcon $width={45}><WeatherIcon /></TrayIcon>
          <TrayText $width={70} $size={20.5} $tracking={-0.5}>27°C</TrayText>
          <TrayIcon $width={33}>
            <svg width="18" height="10" viewBox="0 0 18 10" fill="none" stroke="#111" strokeWidth="1.500"><path d="M.5 9.500L9 1L17.500 9.500" /></svg>
          </TrayIcon>
          <TrayIcon $width={41}>
            <svg width="25" height="24" viewBox="0 0 25 24" fill="none" stroke="#111" strokeWidth="1.200">
              <path d="M14 21.500L.6 20V4L23.500 .8V14" />
              <path d="M7 11Q8 7 12 7.500Q14 8 15.500 10M15.500 6.500V10H12M16 12.500Q15 16.500 11 16Q8.500 15.500 7.500 13.500M7.500 17V13.500H11" />
              <circle cx="18.500" cy="18.500" r="5.700" fill="#2b70b8" stroke="none" />
            </svg>
          </TrayIcon>
          <TrayIcon $width={32}>
            <svg width="16" height="22" viewBox="0 0 16 22" fill="none" stroke="#111" strokeWidth="1.200">
              <rect x=".6" y="5.500" width="10" height="11" rx="2" />
              <path d="M10.600 9.500L15.400 6V16L10.600 12.500M2 2.500Q7.500 -.8 13 2.500M2 19.500Q7.500 22.800 13 19.500" />
            </svg>
          </TrayIcon>
          <TrayIcon $width={39}>
            <svg width="23" height="20" viewBox="0 0 23 20" fill="none" stroke="#111" strokeWidth="1.200">
              <path d="M.6 6.800H4L9.500 1.500V18.500L4 13.200H.6ZM12.500 7Q14.200 10 12.500 13M15.500 4.500Q18.800 10 15.500 15.500M18.700 2Q24 10 18.700 18" />
            </svg>
          </TrayIcon>
          <TrayText $width={41} $size={17} $tracking={-0.4}>ENG</TrayText>
          <Clock>
            <span>11:56</span>
            <span>13-07-2022</span>
          </Clock>
          <Notifications><NotificationIcon /></Notifications>
          <TrayIcon $width={11} />
          <ShowDesktop />
        </Tray>
      </Taskbar>
    </Screen>
  );
}
